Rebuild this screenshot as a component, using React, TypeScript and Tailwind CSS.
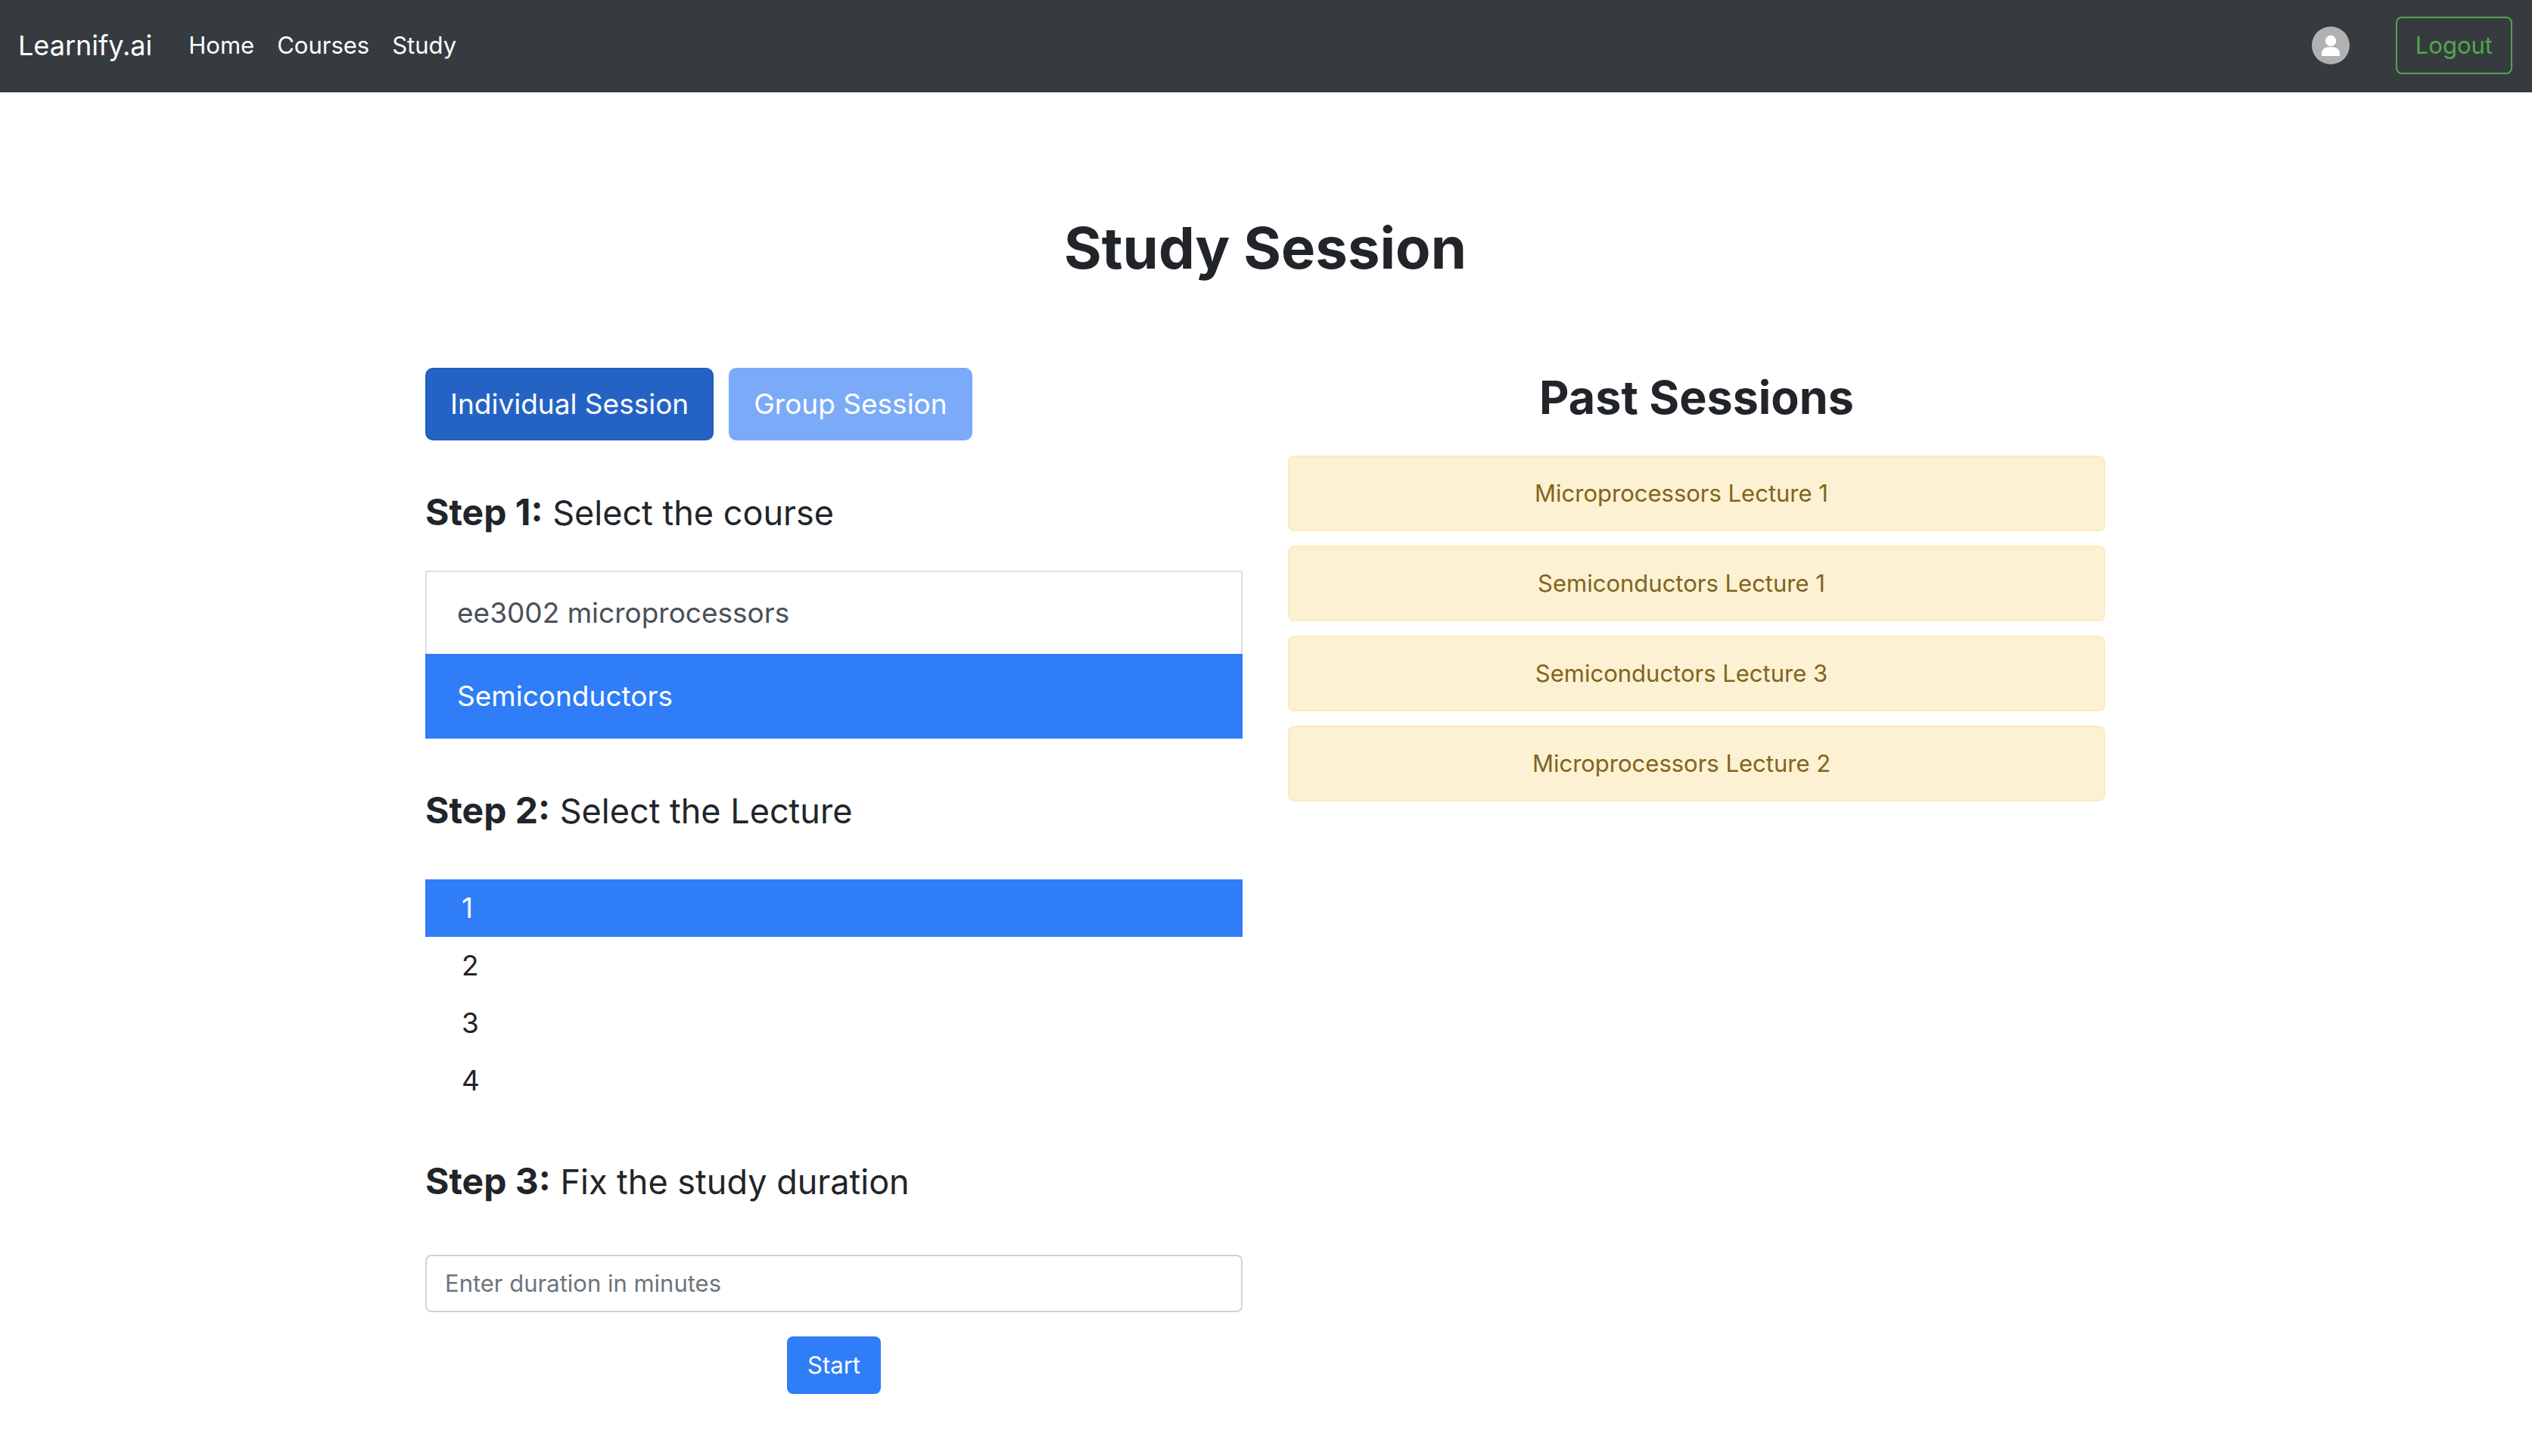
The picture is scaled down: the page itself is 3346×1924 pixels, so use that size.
import { useState } from "react";
import type { ReactNode } from "react";

const NAV_LINKS = ["Home", "Courses", "Study"];
const SESSION_TYPES = ["Individual Session", "Group Session"];
const COURSES = ["ee3002 microprocessors", "Semiconductors"];
const LECTURES = ["1", "2", "3", "4"];
const PAST_SESSIONS = [
  "Microprocessors Lecture 1",
  "Semiconductors Lecture 1",
  "Semiconductors Lecture 3",
  "Microprocessors Lecture 2",
];

function Avatar() {
  return (
    <svg viewBox="0 0 50 50" className="size-[50px]" aria-hidden="true">
      <circle cx="25" cy="25" r="25" fill="#b1b1b1" />
      <circle cx="25" cy="19" r="7.2" fill="#fff" />
      <path d="M13 39V36C13 30.5 17 27.2 22.5 27.2H27.5C33 27.2 37 30.5 37 36V39Z" fill="#fff" />
    </svg>
  );
}

function Header() {
  return (
    <header className="flex items-center bg-[#363b3f] pt-[22px] pr-[26px] pb-6 pl-6 text-white">
      <a href="#" className="mr-12 text-[36px] leading-[60px]">
        Learnify.ai
      </a>
      <nav className="flex gap-[30px] text-[31px] leading-[48px]">
        {NAV_LINKS.map((label) => (
          <a key={label} href="#">
            {label}
          </a>
        ))}
      </nav>
      <div className="ml-auto flex items-center gap-[61px]">
        <a href="#" aria-label="Profile">
          <Avatar />
        </a>
        <button
          type="button"
          className="rounded-lg border-2 border-[#53a651] px-6 py-3 text-[31px] leading-[48px] text-[#53a651]"
        >
          Logout
        </button>
      </div>
    </header>
  );
}

function StepTitle({ step, children }: { step: number; children: ReactNode }) {
  return (
    <h2 className="mt-[67px] text-[45px] leading-[58px]">
      <strong className="text-[48px] leading-none font-bold">Step {step}:</strong> {children}
    </h2>
  );
}

function PastSessions() {
  return (
    <section>
      <h2 className="text-center text-[61px] leading-[78px] font-bold">Past Sessions</h2>
      <ul className="mt-[38px] flex flex-col gap-[19px]">
        {PAST_SESSIONS.map((label) => (
          <li
            key={label}
            className="rounded-lg border-2 border-[#fcecbe] bg-[#fcf1d2] py-6 pr-20 pl-10 text-center text-[31px] leading-[48px] text-[#806420]"
          >
            {label}
          </li>
        ))}
      </ul>
    </section>
  );
}

export default function App() {
  const [sessionType, setSessionType] = useState(SESSION_TYPES[0]);
  const [course, setCourse] = useState(COURSES[1]);
  const [lecture, setLecture] = useState(LECTURES[0]);

  return (
    <div className="bg-white font-['Inter',sans-serif] text-[#212529]">
      <Header />
      <main className="mx-auto w-full max-w-[2282px] pr-8 pl-[30px] pb-20">
        <h1 className="mt-[157px] mb-[111px] text-center text-[76px] leading-[96px] font-bold">
          Study Session
        </h1>
        <div className="grid grid-cols-2 items-start gap-[60px]">
          <form onSubmit={(e) => e.preventDefault()}>
            <div className="flex gap-5 text-[37px] leading-[60px] text-white">
              {SESSION_TYPES.map((label) => (
                <button
                  key={label}
                  type="button"
                  aria-pressed={label === sessionType}
                  onClick={() => setSessionType(label)}
                  className={
                    label === sessionType
                      ? "rounded-[10px] border-2 border-[#205db8] bg-[#2463c4] px-[31px] py-4"
                      : "rounded-[10px] border-2 border-[#7baaf9] bg-[#7baaf9] px-[31px] py-4"
                  }
                >
                  {label}
                </button>
              ))}
            </div>

            <StepTitle step={1}>Select the course</StepTitle>
            <div className="mt-[47px] flex flex-col text-[37px] leading-[60px]">
              {COURSES.map((label) => (
                <button
                  key={label}
                  type="button"
                  aria-pressed={label === course}
                  onClick={() => setCourse(label)}
                  className={
                    label === course
                      ? "-mb-[2px] border-2 border-[#2f7df7] bg-[#2f7df7] px-10 py-6 text-left text-white last:mb-0"
                      : "-mb-[2px] border-2 border-[#dfdfdf] bg-white px-10 py-6 text-left text-[#495057] last:mb-0"
                  }
                >
                  {label}
                </button>
              ))}
            </div>

            <StepTitle step={2}>Select the Lecture</StepTitle>
            <div className="mt-[61px] flex flex-col text-[37px] leading-[60px]">
              {LECTURES.map((label) => (
                <button
                  key={label}
                  type="button"
                  aria-pressed={label === lecture}
                  onClick={() => setLecture(label)}
                  className={
                    label === lecture
                      ? "bg-[#2f7df7] px-12 py-2 text-left text-white"
                      : "px-12 py-2 text-left"
                  }
                >
                  {label}
                </button>
              ))}
            </div>

            <StepTitle step={3}>
              <label htmlFor="duration">Fix the study duration</label>
            </StepTitle>
            <input
              id="duration"
              type="text"
              inputMode="numeric"
              placeholder="Enter duration in minutes"
              className="mt-[67px] block w-full rounded-lg border-2 border-[#ced3d8] bg-white px-6 py-3 text-[31px] leading-[48px] placeholder:text-[#6c757d]"
            />
            <button
              type="submit"
              className="mx-auto mt-8 block rounded-lg bg-[#2f7df7] px-[27px] py-[14px] text-[31px] leading-[48px] text-white"
            >
              Start
            </button>
          </form>
          <PastSessions />
        </div>
      </main>
    </div>
  );
}
